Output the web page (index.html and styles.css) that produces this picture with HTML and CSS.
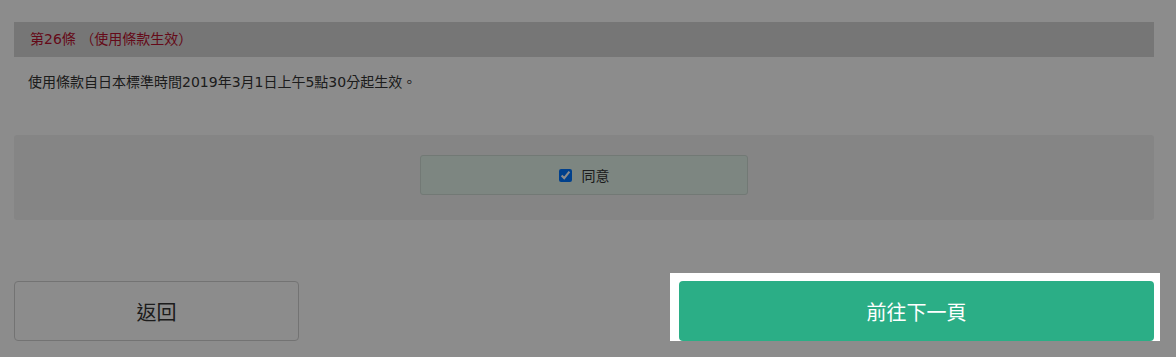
FILE: index.html
```html
<!DOCTYPE html>
<html lang="zh-Hant">
<head>
  <meta charset="utf-8">
  <title>使用條款</title>
  <link rel="stylesheet" href="styles.css">
</head>
<body>
  <div class="page">
    <div class="article">
      <h3 class="article-head">第26條 （使用條款生效）</h3>
      <p class="article-body">使用條款自日本標準時間2019年3月1日上午5點30分起生效。</p>
    </div>

    <div class="agree-panel">
      <label class="agree-box">
        <input type="checkbox" id="agreeCheck" checked>
        <span>同意</span>
      </label>
    </div>

    <div class="actions">
      <button class="btn btn-back">返回</button>
      <div class="tour-focus">
        <button class="btn btn-next">前往下一頁</button>
      </div>
    </div>
  </div>

  <!-- guide overlay, the focused step sits above it -->
  <div class="tour-overlay"></div>
</body>
</html>
```

FILE: styles.css
```css
:root {
  --text-color: #333333;
  --accent-red: #b8122f;
  --green: #2bae86;
  --head-bg: #d7d7d7;
  --panel-bg: #f2f2f2;
  --agree-bg: #e3f5ec;
  --border-color: #d2d2d2;
}

body {
  margin: 0;
  font-family: "DejaVu Sans", "Noto Sans CJK TC", sans-serif;
  color: var(--text-color);
  background: #ffffff;
}

.page {
  padding: 22px 22px 0 14px;
}

.article-head {
  margin: 0;
  height: 35px;
  padding-left: 16px;
  line-height: 35px;
  font-size: 14px;
  font-weight: normal;
  color: var(--accent-red);
  background-color: var(--head-bg);
}

.article-body {
  margin: 0 0 42px;
  padding: 14px 14px 0;
  font-size: 14px;
  line-height: 22px;
}

.agree-panel {
  display: flex;
  justify-content: center;
  padding: 20px 0 25px;
  background-color: var(--panel-bg);
  border-radius: 3px;
}

.agree-box {
  display: flex;
  align-items: center;
  justify-content: center;
  gap: 10px;
  width: 326px;
  height: 38px;
  font-size: 14px;
  background-color: var(--agree-bg);
  border: 1px solid #cfdcd5;
  border-radius: 3px;
}

.agree-box input {
  width: 13px;
  height: 13px;
  margin: 0;
}

.actions {
  display: flex;
  justify-content: space-between;
  align-items: flex-start;
  margin-top: 61px;
}

.btn {
  height: 60px;
  font-family: "Noto Sans CJK TC", sans-serif;
  font-size: 20px;
  border-radius: 4px;
  cursor: pointer;
}

.btn-back {
  width: 285px;
  color: var(--text-color);
  background-color: #ffffff;
  border: 1px solid var(--border-color);
}

.btn-next {
  display: block;
  width: 475px;
  color: #ffffff;
  background-color: var(--green);
  border: none;
}

.tour-focus {
  position: relative;
  z-index: 101;
  margin: -8px -6px -5px -9px;
  padding: 8px 6px 5px 9px;
  background-color: #ffffff;
}

.tour-overlay {
  position: fixed;
  inset: 0;
  z-index: 100;
  background-color: rgba(0, 0, 0, 0.45);
}
```
